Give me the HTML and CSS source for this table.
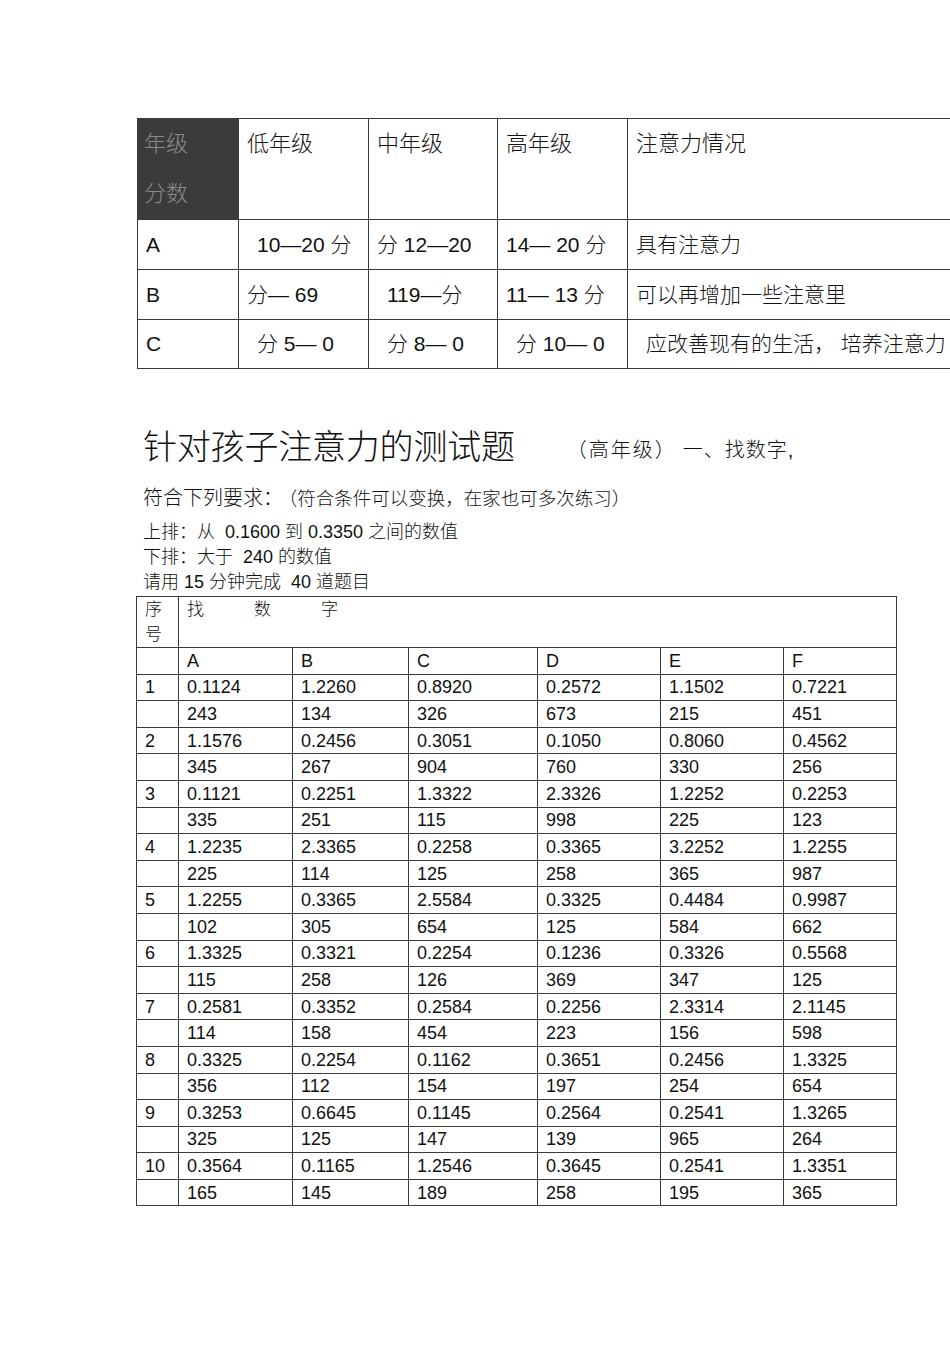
FILE: index.html
```html
<!DOCTYPE html>
<html lang="zh-CN">
<head>
<meta charset="utf-8">
<title>针对孩子注意力的测试题</title>
<link rel="stylesheet" href="styles.css">
</head>
<body>
<div class="page">
  <table class="grade">
    <colgroup>
      <col class="g1"><col class="g2"><col class="g3"><col class="g4"><col class="g5">
    </colgroup>
    <tr class="ghead">
      <td class="dark">年级<br>分数</td>
      <td>低年级</td>
      <td>中年级</td>
      <td>高年级</td>
      <td>注意力情况</td>
    </tr>
    <tr class="grow">
      <td>A</td>
      <td><span class="ind">10—20 分</span></td>
      <td>分 12—20</td>
      <td>14— 20 分</td>
      <td>具有注意力</td>
    </tr>
    <tr class="grow">
      <td>B</td>
      <td>分— 69</td>
      <td><span class="ind">119—分</span></td>
      <td>11— 13 分</td>
      <td>可以再增加一些注意里</td>
    </tr>
    <tr class="grow last">
      <td>C</td>
      <td><span class="ind">分 5— 0</span></td>
      <td><span class="ind">分 8— 0</span></td>
      <td><span class="ind">分 10— 0</span></td>
      <td><span class="ind">应改善现有的生活， 培养注意力</span></td>
    </tr>
  </table>

  <div class="text">
    <h1 class="title">针对孩子注意力的测试题<span class="sub">（高年级）</span><span class="sub2">一、找数字,</span></h1>
    <p class="req">符合下列要求：<span class="note">（符合条件可以变换，在家也可多次练习）</span></p>
    <p class="rule">上排：从&nbsp; 0.1600 到 0.3350 之间的数值</p>
    <p class="rule">下排：大于&nbsp; 240 的数值</p>
    <p class="rule">请用 15 分钟完成&nbsp; 40 道题目</p>
  </div>

  <table class="find">
    <colgroup>
      <col class="c0"><col class="c1"><col class="c2"><col class="c3"><col class="c4"><col class="c5"><col class="c6">
    </colgroup>
    <tr class="fhead">
      <td class="seq">序<br>号</td>
      <td colspan="6" class="findlbl"><span>找</span><span>数</span><span>字</span></td>
    </tr>
    <tr><td></td><td>A</td><td>B</td><td>C</td><td>D</td><td>E</td><td>F</td></tr>
    <tr><td>1</td><td>0.1124</td><td>1.2260</td><td>0.8920</td><td>0.2572</td><td>1.1502</td><td>0.7221</td></tr>
    <tr><td></td><td>243</td><td>134</td><td>326</td><td>673</td><td>215</td><td>451</td></tr>
    <tr><td>2</td><td>1.1576</td><td>0.2456</td><td>0.3051</td><td>0.1050</td><td>0.8060</td><td>0.4562</td></tr>
    <tr><td></td><td>345</td><td>267</td><td>904</td><td>760</td><td>330</td><td>256</td></tr>
    <tr><td>3</td><td>0.1121</td><td>0.2251</td><td>1.3322</td><td>2.3326</td><td>1.2252</td><td>0.2253</td></tr>
    <tr><td></td><td>335</td><td>251</td><td>115</td><td>998</td><td>225</td><td>123</td></tr>
    <tr><td>4</td><td>1.2235</td><td>2.3365</td><td>0.2258</td><td>0.3365</td><td>3.2252</td><td>1.2255</td></tr>
    <tr><td></td><td>225</td><td>114</td><td>125</td><td>258</td><td>365</td><td>987</td></tr>
    <tr><td>5</td><td>1.2255</td><td>0.3365</td><td>2.5584</td><td>0.3325</td><td>0.4484</td><td>0.9987</td></tr>
    <tr><td></td><td>102</td><td>305</td><td>654</td><td>125</td><td>584</td><td>662</td></tr>
    <tr><td>6</td><td>1.3325</td><td>0.3321</td><td>0.2254</td><td>0.1236</td><td>0.3326</td><td>0.5568</td></tr>
    <tr><td></td><td>115</td><td>258</td><td>126</td><td>369</td><td>347</td><td>125</td></tr>
    <tr><td>7</td><td>0.2581</td><td>0.3352</td><td>0.2584</td><td>0.2256</td><td>2.3314</td><td>2.1145</td></tr>
    <tr><td></td><td>114</td><td>158</td><td>454</td><td>223</td><td>156</td><td>598</td></tr>
    <tr><td>8</td><td>0.3325</td><td>0.2254</td><td>0.1162</td><td>0.3651</td><td>0.2456</td><td>1.3325</td></tr>
    <tr><td></td><td>356</td><td>112</td><td>154</td><td>197</td><td>254</td><td>654</td></tr>
    <tr><td>9</td><td>0.3253</td><td>0.6645</td><td>0.1145</td><td>0.2564</td><td>0.2541</td><td>1.3265</td></tr>
    <tr><td></td><td>325</td><td>125</td><td>147</td><td>139</td><td>965</td><td>264</td></tr>
    <tr><td>10</td><td>0.3564</td><td>0.1165</td><td>1.2546</td><td>0.3645</td><td>0.2541</td><td>1.3351</td></tr>
    <tr><td></td><td>165</td><td>145</td><td>189</td><td>258</td><td>195</td><td>365</td></tr>
  </table>
</div>
</body>
</html>
```

FILE: styles.css
```css
html, body {
  margin: 0;
  padding: 0;
  background: #ffffff;
  overflow: hidden;
}

body {
  width: 950px;
  height: 1345px;
  font-family: "Liberation Sans", "Noto Sans CJK SC", sans-serif;
  font-weight: 300;
  color: #111111;
}

.page {
  width: 950px;
  padding: 118px 0 0 137px;
  box-sizing: border-box;
  overflow: hidden;
}

/* ---------- grade table ---------- */
.grade {
  border-collapse: collapse;
  table-layout: fixed;
  width: 820px;
  font-size: 21px;
}

.grade .g1 { width: 101px; }
.grade .g2 { width: 130px; }
.grade .g3 { width: 129px; }
.grade .g4 { width: 130px; }
.grade .g5 { width: 330px; }

.grade td {
  border: 1px solid #3a3a3a;
  padding: 0 0 0 8px;
  white-space: nowrap;
  overflow: hidden;
}

.grade .ghead td {
  height: 98px;
  vertical-align: top;
  line-height: 50px;
  font-size: 22px;
}

.grade .ghead td.dark {
  background: #3b3b3b;
  color: #8c8c8c;
  padding-left: 6px;
}

.grade .grow td {
  height: 49px;
  vertical-align: middle;
  line-height: 26px;
}

.grade .grow.last td {
  height: 48px;
}

.grade .ind {
  padding-left: 10px;
}

/* ---------- text block ---------- */
.text {
  padding-left: 6px;
}

.title {
  margin: 56px 0 0 0;
  font-size: 34px;
  font-weight: 300;
  line-height: 44px;
  letter-spacing: -0.2px;
}

.title .sub {
  font-size: 20px;
  letter-spacing: 2px;
  margin-left: 52px;
  vertical-align: 2px;
}

.title .sub2 {
  font-size: 20px;
  margin-left: 6px;
  letter-spacing: 1px;
  vertical-align: 2px;
}

.req {
  margin: 11px 0 0 0;
  font-size: 20px;
  line-height: 30px;
}

.req .note {
  font-size: 18.5px;
  margin-left: 5px;
}

.rule {
  margin: 0;
  font-size: 18px;
  line-height: 25px;
}

.req + .rule {
  margin-top: 6px;
}

/* ---------- find table ---------- */
.find {
  margin: 1px 0 0 -1px;
  border-collapse: collapse;
  table-layout: fixed;
  width: 760px;
  font-size: 18px;
}

.find .c0 { width: 42px; }
.find .c1 { width: 114px; }
.find .c2 { width: 116px; }
.find .c3 { width: 129px; }
.find .c4 { width: 123px; }
.find .c5 { width: 123px; }
.find .c6 { width: 113px; }

.find td {
  border: 1px solid #3c3c3c;
  padding: 0 0 0 8px;
  height: 25.6px;
  line-height: 20px;
  vertical-align: middle;
  white-space: nowrap;
}

.find .fhead td {
  height: 48px;
  vertical-align: top;
  line-height: 25px;
  font-size: 17px;
  padding-top: 0;
}

.find .findlbl span {
  display: inline-block;
  margin-right: 50px;
}
```
